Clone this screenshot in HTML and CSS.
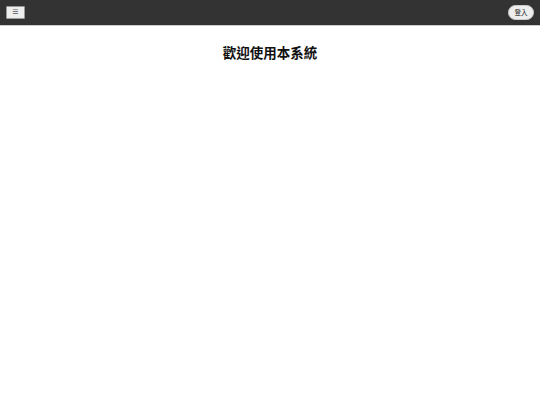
FILE: index.html
```html
<!DOCTYPE html>
<html lang="zh-Hant">
<head>
<meta charset="utf-8">
<link rel="stylesheet" href="styles.css">
</head>
<body>
<header class="topbar">
  <button class="menu-btn">☰</button>
  <button class="login-btn">登入</button>
</header>
<main class="content">
  <h1 class="title">歡迎使用本系統</h1>
</main>
</body>
</html>
```
FILE: styles.css
```css
html, body {
  margin: 0;
  padding: 0;
  background: #fff;
  font-family: "Liberation Sans", "Noto Sans CJK TC", sans-serif;
}
.topbar {
  height: 26px;
  background: #333;
  display: flex;
  align-items: center;
  justify-content: space-between;
  padding: 0 6px;
  border-bottom: 1px solid #ccc;
  box-sizing: border-box;
}
.menu-btn {
  width: 19px;
  height: 13px;
  padding: 0;
  margin: 0;
  background: #eee;
  border: 1px solid #999;
  border-radius: 1px;
  font-size: 7px;
  line-height: 11px;
  color: #555;
  font-family: "DejaVu Sans", sans-serif;
}
.login-btn {
  width: 26px;
  height: 15px;
  padding: 0;
  margin: 0;
  background: #eee;
  border: 1px solid #ccc;
  border-radius: 8px;
  font-size: 6.5px;
  line-height: 13px;
  color: #222;
  font-family: "Noto Sans CJK TC", sans-serif;
}
.content {
  text-align: center;
  padding-top: 16px;
}
.title {
  margin: 0;
  font-size: 13.5px;
  font-weight: bold;
  color: #111;
  font-family: "Noto Sans CJK TC", sans-serif;
}
```
